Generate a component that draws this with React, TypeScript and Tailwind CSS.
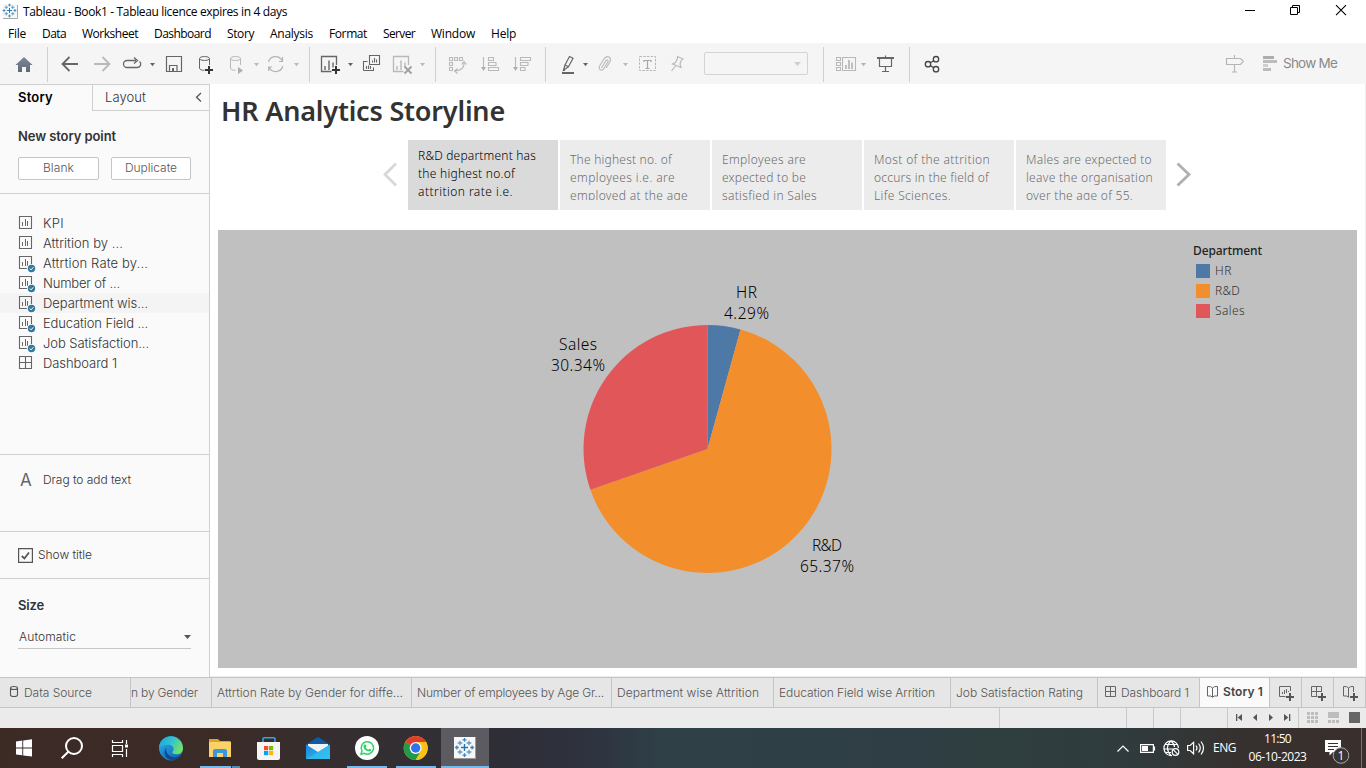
import { useLayoutEffect, useRef, type ReactNode } from "react";

/** Text tracked so that it fills a given width in pixels. */
function Fit({ w, className = "", children }: { w: number; className?: string; children: string }) {
  const ref = useRef<HTMLSpanElement>(null);
  useLayoutEffect(() => {
    const el = ref.current;
    if (!el) return;
    el.style.letterSpacing = "0px";
    const natural = el.getBoundingClientRect().width;
    el.style.letterSpacing = `${(w - natural) / children.length}px`;
  }, [w, children]);
  return (
    <span ref={ref} className={`inline-block shrink-0 whitespace-pre ${className}`}>
      {children}
    </span>
  );
}

/** A strip of drawing whose coordinates are window coordinates. */
function Strip({ x, y, w, h, children }: { x: number; y: number; w: number; h: number; children?: ReactNode }) {
  return (
    <svg width={w} height={h} viewBox={`${x} ${y} ${w} ${h}`} className="block shrink-0" fill="none">
      {children}
    </svg>
  );
}

const Tool = ({ x, w, children }: { x: number; w: number; children?: ReactNode }) => (
  <Strip x={x} y={43} w={w} h={41}>{children}</Strip>
);
const Sep = () => <div className="mt-1 h-[35px] w-px shrink-0 bg-[#d0d0d0]" />;
const Caret = ({ x, c = "#666" }: { x: number; c?: string }) => <path d={`M${x} 63h5l-2.5 3.2z`} fill={c} />;

function TableauMark({ cx, cy, s }: { cx: number; cy: number; s: number }) {
  const plus = (x: number, y: number, r: number) => `M${cx + (x - r) * s} ${cy + y * s}h${2 * r * s}M${cx + x * s} ${cy + (y - r) * s}v${2 * r * s}`;
  return (
    <g>
      <path d={plus(0, 0, 3.6)} stroke="#2a72a8" strokeWidth={1.4 * s} />
      <path d={plus(-4.6, -4.6, 2.4) + plus(4.6, -4.6, 2.4) + plus(-4.6, 4.6, 2.4) + plus(4.6, 4.6, 2.4)} stroke="#5f9dc6" strokeWidth={1.4 * s} />
      <path d={plus(0, -7.8, 2) + plus(0, 7.8, 2) + plus(-7.8, 0, 2) + plus(7.8, 0, 2)} stroke="#3f83b3" strokeWidth={1.3 * s} />
    </g>
  );
}

const menus: [string, number][] = [
  ["File", 18], ["Data", 24], ["Worksheet", 56], ["Dashboard", 57], ["Story", 27],
  ["Analysis", 43], ["Format", 38], ["Server", 32], ["Window", 44], ["Help", 25],
];

function TitleBar() {
  return (
    <div className="flex h-6 items-center font-['Open_Sans','Noto_Sans',sans-serif] text-[12px] text-black">
      <Strip x={0} y={0} w={23} h={24}>
        <path d="M3 4h15v15H3z" fill="#f6f7f8" />
        <path d="M17.5 5v13.5H3" stroke="#aaa" />
        <TableauMark cx={9.5} cy={10.5} s={0.7} />
      </Strip>
      <Fit w={264}>Tableau - Book1 - Tableau licence expires in 4 days</Fit>
      <div className="grow" />
      <Strip x={1240} y={0} w={126} h={24}>
        <g stroke="#000">
          <path d="M1245 10.5h10" />
          <path d="M1290.5 7.5h7v7h-7zM1292.5 7.5v-2h7v7h-2" />
          <path d="M1336 5.2l10 10M1346 5.2l-10 10" strokeWidth="1.1" />
        </g>
      </Strip>
    </div>
  );
}

function MenuBar() {
  return (
    <div className="flex h-[19px] items-center gap-4 pl-2 font-['Open_Sans','Noto_Sans',sans-serif] text-[12px] text-black">
      {menus.map(([m, w]) => <Fit key={m} w={w}>{m}</Fit>)}
    </div>
  );
}

function Toolbar() {
  return (
    <div className="flex h-[41px] bg-[#f5f5f5]">
      <Tool x={0} w={47}>
        <defs><linearGradient id="home" x1="0" y1="0" x2="0" y2="1"><stop stopColor="#7f8997" /><stop offset="1" stopColor="#5d697a" /></linearGradient></defs>
        <path d="M24 57l8.5 8H30v7h-4v-5h-4v5h-4v-7h-2.500z" fill="url(#home)" />
      </Tool>
      <Sep />
      <Tool x={48} w={261}>
        <path d="M78 64H63.500M69.500 57l-7 7l7 7" stroke="#666" strokeWidth="1.8" />
        <path d="M94 64h14.500M102.500 57l7 7l-7 7" stroke="#b9b9b9" strokeWidth="1.8" />
        <path d="M136 60.500h-9a3.500 3.500 0 0 0 0 7h10.500a3.400 3.400 0 0 0 2-6M134 57.500l3.500 3l-3.500 3" stroke="#666" strokeWidth="1.300" />
        <Caret x={150} />
        <path d="M166.500 56.500h15v15h-15zM169.500 71v-5.500h7.500v5.500" stroke="#666" strokeWidth="1.200" />
        <path d="M172 68h2v3.500h-2z" fill="#666" />
        <path d="M199.500 58.500v9.500q0 2.300 5 2.300M209.500 58.500v6.500" stroke="#666" />
        <ellipse cx="204.500" cy="58.500" rx="5" ry="2" stroke="#666" />
        <path d="M209 66v8M205 70h8" stroke="#333" strokeWidth="2" />
        <path d="M230.500 58.500v9.500q0 2.300 5 2.300M240.500 58.500v6.500" stroke="#b9b9b9" />
        <ellipse cx="235.500" cy="58.500" rx="5" ry="2" stroke="#b9b9b9" />
        <path d="M238 67l5 3.500l-5 3.500z" fill="#adadad" />
        <Caret x={254} c="#b9b9b9" />
        <path d="M268.500 62a7.300 7.300 0 0 1 13.500-1.500M282.800 66a7.300 7.300 0 0 1-13.600 1.500M282.500 57v4.500h-3.500M268.700 71v-4h3.500" stroke="#b3b3b3" strokeWidth="1.200" />
        <Caret x={294} c="#b9b9b9" />
      </Tool>
      <Sep />
      <Tool x={310} w={125}>
        <path d="M336.500 65v-8.500h-15v15h10" stroke="#666" strokeWidth="1.300" />
        <path d="M325 66v4M329 60.500v9.500M333 62.500v5" stroke="#666" strokeWidth="1.400" />
        <path d="M336 66v8M332 70h8" stroke="#333" strokeWidth="2" />
        <Caret x={348} />
        <path d="M369.500 59.500v-4h10v9h-4.500M363.500 70.500v-9h4M363.500 70.500h10v-3M366.500 66v3M368.500 65.500v3.500M370.500 66v3M372.500 60.500v2M374.500 58v4.500M376.500 59.500v3M369.500 59v5.500h6" stroke="#666" strokeWidth="1.100" />
        <path d="M408.500 65v-8.500h-15v15h10" stroke="#b9b9b9" strokeWidth="1.300" />
        <path d="M397 66v4M401 60.500v9.500M405 62.500v5" stroke="#b9b9b9" strokeWidth="1.400" />
        <path d="M404.500 66.500l7 7M411.500 66.500l-7 7" stroke="#a0a0a0" strokeWidth="1.900" />
        <Caret x={420} c="#b9b9b9" />
      </Tool>
      <Sep />
      <Tool x={436} w={109}>
        <g stroke="#b9b9b9" strokeWidth="1.100">
          <path d="M449.500 57.500h3v3h-3zM454.500 57.500h3v3h-3zM459.500 57.500h3v3h-3zM449.500 62.500h3v3h-3zM449.500 67.500h3v3h-3zM464 62q1 8-9 9M461.500 64.500l2.500-3l2.500 3M457.500 68.500l-3 2.500l3 2.500" />
          <path d="M488.500 57.500h5v3h-5zM488.500 62.500h7.500v3h-7.500zM488.500 67.500h10v3h-10zM483.500 57v13M520.500 57.500h10v3h-10zM520.500 62.500h7.500v3h-7.500zM520.500 67.500h4.500v3h-4.500zM515.500 57v13" />
        </g>
        <path d="M481 67h5l-2.500 4zM513 67h5l-2.500 4z" fill="#adadad" />
      </Tool>
      <Sep />
      <Tool x={546} w={158}>
        <path d="M562 72h12v2h-12z" fill="#666" />
        <path d="M569.500 56.500l3.500 1.800-4.500 8.500-3.500-1.800zM565 65l-1.500 5l5-3.200M563 70.500h2" stroke="#666" strokeWidth="1.200" />
        <Caret x={583} />
        <path d="M601.500 68l4.500-7.500q1.800-1.300 2.200.8l-4.500 7.700q-3 2.800-4.500-.5q-.5-1.500.8-3.200l4-6.500q2.500-3 5-1.800q2.200 1.500 1.200 4.200l-4 6.800" stroke="#b9b9b9" strokeWidth="1.100" />
        <Caret x={623} c="#b9b9b9" />
        <path d="M639.500 56.500h16v14h-16z" stroke="#b9b9b9" strokeDasharray="2.500 1.200" />
        <path d="M644 62v-1.500h7V62M647.500 60.500v8M645.500 68.500h4" stroke="#a8a8a8" strokeWidth="1.200" />
        <path d="M677.500 56.500l5.500 2.500-1.500 1-1.500 4 1 3.500-8.500-3.500 3-1.500 2-4zM675.500 66l-4 5" stroke="#b9b9b9" strokeWidth="1.200" />
      </Tool>
      <div className="mt-[9px] flex h-[23px] w-[104px] shrink-0 items-center justify-end rounded-[2px] border border-[#d3d3d3] pr-[5px]">
        <svg width="8" height="4"><path d="M0 0h7L3.500 4z" fill="#cfcfcf" /></svg>
      </div>
      <Tool x={808} w={15} />
      <Sep />
      <Tool x={824} w={85}>
        <path d="M836.500 57.500h4v3h-4zM836.500 62.500h4v3h-4zM836.500 67.500h4v3h-4zM842.500 57.500h13v13h-13z" stroke="#b9b9b9" strokeWidth="1.100" />
        <path d="M846 65v4M849 60v9M852 62.500v6.500" stroke="#b3b3b3" strokeWidth="1.600" />
        <Caret x={861} c="#b3b3b3" />
        <path d="M877 58h17" stroke="#666" strokeWidth="2" />
        <path d="M879.500 58v8.500h12V58M885.500 55.500v2M885.500 66.500v5M882 71.500h7" stroke="#666" strokeWidth="1.200" />
      </Tool>
      <Sep />
      <Tool x={910} w={50}>
        <g stroke="#444" strokeWidth="1.300"><circle cx="936" cy="59.200" r="2.700" /><circle cx="928" cy="64.200" r="2.700" /><circle cx="936" cy="69.200" r="2.700" /><path d="M930.300 62.800l3.500-2.100M930.300 65.600l3.500 2.100" /></g>
      </Tool>
      <div className="grow" />
      <Tool x={1220} w={63}>
        <path d="M1234.500 55v3M1226.500 58.500h14l2.800 2.800l-2.800 3.200h-14zM1234.500 65v7M1232 72h5" stroke="#b5b5b5" strokeWidth="1.200" />
        <path d="M1263 56h11v3h-11z" fill="#adadad" />
        <path d="M1263 60h14v3h-14z M1263 68h8v3h-8z" fill="#bcbcbc" />
        <path d="M1263 64h5v3h-5z" fill="#d0d0d0" />
      </Tool>
      <div className="flex w-[83px] items-center">
        <Fit w={54} className="font-['Inter',sans-serif] text-[13.5px] text-[#8a8a8a]">Show Me</Fit>
      </div>
    </div>
  );
}

function SheetIcon({ kind }: { kind: "sheet" | "used" | "dash" }) {
  return (
    <svg width="18" height="20" className="block shrink-0" fill="none">
      {kind === "dash" ? (
        <path d="M1.500 3.500h12v12h-12zM7.500 3.500v12M1.500 9.500h12" stroke="#666" strokeWidth="1.100" />
      ) : (
        <>
          <path d="M1.500 3.500h12v12h-12z" stroke="#666" strokeWidth="1.100" />
          <path d="M4.500 9v4M7.500 6v7M9.500 8v5" stroke="#666" />
        </>
      )}
      {kind === "used" && (
        <>
          <circle cx="13.500" cy="15.500" r="4.600" fill="#fafafa" />
          <circle cx="13.500" cy="15.500" r="3.700" fill="#34789b" />
          <path d="M11.700 15.500l1.300 1.400l2.300-2.600" stroke="#fff" />
        </>
      )}
    </svg>
  );
}

const sheets: [string, number, "sheet" | "used" | "dash"][] = [
  ["KPI", 21, "sheet"], ["Attrition by ...", 80, "sheet"], ["Attrtion Rate by...", 105, "used"], ["Number of ...", 77, "used"],
  ["Department wis...", 105, "used"], ["Education Field ...", 105, "used"], ["Job Satisfaction...", 106, "used"], ["Dashboard 1", 74, "dash"],
];

function Sidebar() {
  return (
    <div className="flex w-[210px] shrink-0 flex-col border-t border-r border-[#cfcfcf] bg-[#fafafa] font-['Inter',sans-serif] text-[13px] font-light text-[#333]">
      <div className="flex h-[26px] shrink-0">
        <div className="flex w-[92px] items-center pl-[18px]"><Fit w={35} className="font-semibold text-black">Story</Fit></div>
        <div className="flex grow items-center border-b border-l border-[#cfcfcf] pl-3">
          <Fit w={41}>Layout</Fit>
          <svg width="7" height="11" className="mr-[7px] mb-px ml-auto" fill="none"><path d="M6 1L1.500 5.200L6 9.500" stroke="#555" strokeWidth="1.300" /></svg>
        </div>
      </div>
      <div className="flex h-[83px] shrink-0 flex-col border-b border-[#cfcfcf] pl-[18px]">
        <div className="mt-4 flex h-5 items-center"><Fit w={98} className="font-semibold">New story point</Fit></div>
        <div className="mt-[10px] flex gap-3 text-[12px] text-[#555]">
          <div className="flex h-[23px] w-[81px] items-center justify-center rounded-[2px] border border-[#c6c6c6] bg-white pb-px"><Fit w={31}>Blank</Fit></div>
          <div className="flex h-[23px] w-[80px] items-center justify-center rounded-[2px] border border-[#c6c6c6] bg-white pb-px"><Fit w={52}>Duplicate</Fit></div>
        </div>
      </div>
      <div className="h-[261px] shrink-0 border-b border-[#cfcfcf] pt-[19px]">
        {sheets.map(([name, w, kind]) => (
          <div key={name} className={`flex h-5 items-center pl-[18px] ${name.startsWith("Department") ? "bg-[#f4f4f4]" : ""}`}>
            <SheetIcon kind={kind} />
            <div className="w-[7px]" />
            <Fit w={w} className="pt-[2px]">{name}</Fit>
          </div>
        ))}
      </div>
      <div className="flex h-[77px] shrink-0 items-start border-b border-[#cfcfcf] pt-[15px] pl-5 text-[12px]">
        <span className="w-[23px] text-[17px] leading-5 font-normal text-[#666]">A</span>
        <Fit w={88} className="leading-5">Drag to add text</Fit>
      </div>
      <div className="flex h-[47px] shrink-0 items-center border-b border-[#cfcfcf] pl-[18px] text-[12px]">
        <svg width="15" height="15" fill="none"><path d="M.6.6h13.800v13.800H.6z" stroke="#555" strokeWidth="1.200" /><path d="M3.800 8l2.600 2.500l4.600-6" stroke="#555" strokeWidth="1.800" /></svg>
        <Fit w={54} className="ml-[5px]">Show title</Fit>
      </div>
      <div className="pt-[17px] pl-[18px]">
        <div className="flex h-5 items-center"><Fit w={26} className="font-semibold">Size</Fit></div>
        <div className="mt-[10px] flex h-[23px] w-[173px] items-center justify-between border-b border-[#c6c6c6] pl-px text-[12px]">
          <Fit w={57}>Automatic</Fit>
          <svg width="7" height="4"><path d="M0 0h7L3.500 4z" fill="#555" /></svg>
        </div>
      </div>
    </div>
  );
}

const points: [string, number][][] = [
  [["R&D department has", 118], ["the highest no.of", 97], ["attrition rate i.e.", 95]],
  [["The highest no. of", 102], ["employees i.e. are", 105], ["employed at the age", 118]],
  [["Employees are", 84], ["expected to be", 84], ["satisfied in Sales", 95]],
  [["Most of the attrition", 116], ["occurs in the field of", 115], ["Life Sciences.", 77]],
  [["Males are expected to", 126], ["leave the organisation", 127], ["over the age of 55.", 107]],
];

const slices = [
  { name: "HR", v: 4.29, color: "#4e79a7" },
  { name: "R&D", v: 65.37, color: "#f28e2b" },
  { name: "Sales", v: 30.34, color: "#e15759" },
];
const CX = 707.5, CY = 449, R = 124;
const at = (pct: number) => {
  const a = (pct / 100) * 2 * Math.PI;
  return `${CX + R * Math.sin(a)} ${CY - R * Math.cos(a)}`;
};

function Pie() {
  let start = 0;
  const label = (x: number, y: number, w: number, s: string) => (
    <text x={x} y={y} textLength={w}>{s}</text>
  );
  return (
    <Strip x={218} y={230} w={968} h={438}>
      {slices.map((s) => {
        const d = `M${CX} ${CY}L${at(start)}A${R} ${R} 0 ${s.v > 50 ? 1 : 0} 1 ${at(start + s.v)}Z`;
        start += s.v;
        return <path key={s.name} d={d} fill={s.color} />;
      })}
      <g fill="#000" className="font-['Noto_Sans',sans-serif] text-[15.5px] font-light">
        {label(736, 298, 21, "HR")}
        {label(724, 319, 45, "4.29%")}
        {label(559, 350, 38, "Sales")}
        {label(551, 371, 54, "30.34%")}
        {label(812, 551, 30, "R&D")}
        {label(800, 572, 54, "65.37%")}
      </g>
    </Strip>
  );
}

function StoryView() {
  return (
    <div className="flex grow flex-col border-r border-b border-[#ededed] bg-white font-['Noto_Sans',sans-serif]">
      <div className="flex h-14 shrink-0 items-center pl-[11px]">
        <Fit w={284} className="pb-0.5 text-[27px] font-semibold text-[#333]">HR Analytics Storyline</Fit>
      </div>
      <div className="flex h-[70px] shrink-0">
        <Strip x={210} y={140} w={198} h={70}><path d="M396 163.500L385 174.500L396 185.500" stroke="#d8d8d8" strokeWidth="2.800" /></Strip>
        <div className="flex gap-0.5 text-[12px] leading-[18px] font-light">
          {points.map((lines, i) => (
            <div key={i} className={`h-[70px] w-[150px] pl-[10px] ${i === 0 ? "bg-[#dadada] pt-[7px] text-black" : "bg-[#ececec] pt-[11px] text-[#6c6c6c]"}`}>
              <div className={`flex flex-col overflow-hidden ${i === 0 ? "h-[54px]" : "h-[49px]"}`}>
                {lines.map(([t, w]) => <div key={t} className="h-[18px] shrink-0"><Fit w={w}>{t}</Fit></div>)}
              </div>
            </div>
          ))}
        </div>
        <Strip x={1166} y={140} w={30} h={70}><path d="M1177.500 163.500L1189 174.500L1177.500 185.500" stroke="#b0b0b0" strokeWidth="2.800" /></Strip>
      </div>
      <div className="mt-5 ml-2 flex h-[438px] w-[1139px] bg-[#c0c0c0]">
        <Pie />
        <div className="pt-[11px] pl-[7px] text-[12px]">
          <div className="flex h-5 items-center"><Fit w={69} className="font-medium text-[#222]">Department</Fit></div>
          {slices.map((s, i) => (
            <div key={s.name} className="flex h-5 items-center pb-px pl-[3px]">
              <div className="mr-[5px] size-[14px]" style={{ backgroundColor: s.color }} />
              <Fit w={[17, 25, 30][i]} className="pt-px font-light text-[#333]">{s.name}</Fit>
            </div>
          ))}
        </div>
      </div>
    </div>
  );
}

function SheetTabs() {
  const tab = "flex h-full shrink-0 items-center border-r border-[#c4c4c4] overflow-hidden";
  return (
    <div className="flex h-[31px] border-t border-b border-[#c4c4c4] bg-[#e6e6e6] font-['Inter',sans-serif] text-[12px] font-light text-[#555]">
      <div className={`${tab} w-[131px]`}>
        <Strip x={0} y={678} w={24} h={29}>
          <path d="M10.500 688v7q0 1.500 3.500 1.500t3.500-1.500V688M10.500 688q0-1.500 3.500-1.500t3.500 1.500q0 1.500-3.500 1.500t-3.500-1.500" stroke="#555" strokeWidth="1.100" />
        </Strip>
        <Fit w={68}>Data Source</Fit>
      </div>
      <div className={`${tab} w-[81px]`}><Fit w={67}>n by Gender</Fit></div>
      <div className={`${tab} w-[200px] pl-[5px]`}><Fit w={186}>Attrtion Rate by Gender for diffe...</Fit></div>
      <div className={`${tab} w-[200px] pl-[5px]`}><Fit w={187}>Number of employees by Age Gr...</Fit></div>
      <div className={`${tab} w-[162px] pl-[5px]`}><Fit w={142}>Department wise Attrition</Fit></div>
      <div className={`${tab} w-[177px] pl-[5px]`}><Fit w={156}>Education Field wise Arrition</Fit></div>
      <div className={`${tab} w-[147px] pl-[5px]`}><Fit w={127}>Job Satisfaction Rating</Fit></div>
      <div className={`${tab} w-[102px]`}>
        <Strip x={1098} y={678} w={23} h={29}><path d="M1105.500 686.500h10v10h-10zM1110.500 686.500v10M1105.500 691.500h10" stroke="#666" /></Strip>
        <Fit w={68}>Dashboard 1</Fit>
      </div>
      <div className={`${tab} w-[70px] bg-[#fafafa]`}>
        <Strip x={1200} y={678} w={23} h={29}><path d="M1207.500 686.500q3.500-.5 5 1.500q1.500-2 5-1.500v9.500h-3.500l-1.500 1.500l-1.500-1.500h-3.500zM1212.500 688v9" stroke="#666" /></Strip>
        <Fit w={40} className="pb-[2px] font-semibold text-[#444]">Story 1</Fit>
      </div>
      <div className={`${tab} w-8`}>
        <Strip x={1270} y={678} w={31} h={29}><path d="M1290.500 691v-4.500h-11v10h6M1282.500 692v2M1284.500 690v4M1286.500 689v4M1288.500 691v1" stroke="#666" /><path d="M1290 693v8M1286 697h8" stroke="#555" strokeWidth="2" /></Strip>
      </div>
      <div className={`${tab} w-8`}>
        <Strip x={1302} y={678} w={31} h={29}><path d="M1321.500 692v-5.500h-10v10h6M1316.500 686.500v10M1311.500 691.500h10" stroke="#666" /><path d="M1322 693v8M1318 697h8" stroke="#555" strokeWidth="2" /></Strip>
      </div>
      <div className={`${tab} w-8`}>
        <Strip x={1334} y={678} w={31} h={29}><path d="M1353.500 692v-5.500q-3.500-.5-5 1.500q-1.500-2-5-1.500v9.500h3.500l1.500 1.500M1348.500 688v9" stroke="#666" /><path d="M1354 693v8M1350 697h8" stroke="#555" strokeWidth="2" /></Strip>
      </div>
    </div>
  );
}

function StatusBar() {
  return (
    <div className="flex h-5 bg-[#ebebeb]">
      {["w-[1000px]", "w-[127px]", "w-[27px]", "w-[27px]", "w-[47px]"].map((w, i) => (
        <div key={i} className={`${w} shrink-0 border-r border-[#c9c9c9]`} />
      ))}
      <Strip x={1228} y={708} w={70} h={20}>
        <path d="M1236 714h1.300v7h-1.300zM1242 714v7l-4.300-3.500zM1257 714v7l-4-3.500zM1269 714v7l4-3.500zM1284 714v7l4.300-3.500zM1289 714h1.300v7h-1.300z" fill="#555" />
      </Strip>
      <div className="w-px shrink-0 bg-[#c9c9c9]" />
      <Strip x={1299} y={708} w={67} h={20}>
        {[712, 716, 720].map((y) => <path key={y} d={`M1307 ${y}h3v3h-3zM1311 ${y}h3v3h-3zM1315 ${y}h3v3h-3z`} fill="#bdbdbd" />)}
        <path d="M1328 712h11v6h-11zM1328 720h3v3h-3zM1332 720h3v3h-3zM1336 720h3v3h-3z" fill="#bdbdbd" />
        <path d="M1349 712h11v11h-11z" fill="#666" />
      </Strip>
    </div>
  );
}

function TaskBar() {
  return (
    <div className="flex h-10 bg-[linear-gradient(90deg,#3c2a25_0px,#3b2b27_220px,#352e30_340px,#2e2e38_520px,#2e3440_600px,#2f4047_660px,#2e3e44_930px,#2f3f3f_980px,#303b3d_1130px,#36312f_1240px,#3a2f2c_1366px)] font-['Open_Sans','Noto_Sans',sans-serif] text-[12px] text-white">
      <Strip x={0} y={728} w={441} h={40}>
        <defs>
          <linearGradient id="edgeA" x1="0" y1="0" x2="1" y2="1"><stop stopColor="#2fb5e8" /><stop offset="1" stopColor="#0a5bb5" /></linearGradient>
          <linearGradient id="edgeB" x1="0" y1="0" x2="1" y2=".4"><stop stopColor="#1aa5df" /><stop offset=".55" stopColor="#35c1cf" /><stop offset="1" stopColor="#6de06a" /></linearGradient>
          <linearGradient id="mail" x1="0" y1="0" x2="1" y2="1"><stop stopColor="#1b84d8" /><stop offset="1" stopColor="#2dc2ef" /></linearGradient>
        </defs>
        <path d="M16 741.500l6.300-.9v6.900H16zM23.200 740.500l8.800-1.200v8.200h-8.800zM16 748.400h6.300v6.900l-6.300-.9zM23.200 748.400H32v8.200l-8.800-1.200z" fill="#fff" />
        <circle cx="74" cy="746" r="8" stroke="#fff" strokeWidth="2" />
        <path d="M68.300 751.700L61.700 758.300" stroke="#fff" strokeWidth="2" />
        <path d="M112.500 740v2.500h10V740M112.500 745.500h10v6h-10zM112.500 757v-2.500h10v2.500M126.500 740v4M126.500 749v8" stroke="#fff" strokeWidth="1.200" />
        <path d="M125 744.500h3v3h-3z" fill="#fff" />
        <circle cx="171" cy="748" r="12" fill="url(#edgeA)" />
        <path d="M159.100 747a12 12 0 0 1 23.900 1.500c0 4-3 5.800-6.500 5.800c-3.300 0-5-1.200-4-2.500c2.500-3 .2-6.800-3.500-7c-4.500-.2-8 1-9.900 2.200z" fill="url(#edgeB)" />
        <path d="M166 750.500c-1 5.500 4 9.500 9 9.500q-8 1.500-11.500-3q-3-6 3-10z" fill="#1183d0" />
        <path d="M166.300 748c-1 5.500 3.500 9.500 9 9.300q3.500-.3 5.700-2.200q-2.500 4.900-9 4.900c-7 0-9-7-5.700-12z" fill="#0c4a8c" />
        <path d="M209 739h9l2 2h10.500v16H209z" fill="#e0a31c" />
        <path d="M209 742h22v15h-22z" fill="#fbd268" />
        <path d="M213 757v-6q0-2 2-2h10q2 0 2 2v6h-4v-4h-6v4z" fill="#3b97db" />
        <path d="M263 743v-4q0-1.200 1.200-1.200h9.600q1.200 0 1.200 1.200v4" stroke="#28a9e8" strokeWidth="1.600" />
        <path d="M257 742h23v16q0 2-2 2h-19q-2 0-2-2z" fill="#f4f4f4" />
        <path d="M264 746h4.200v4.200H264z" fill="#f25022" /><path d="M269 746h4.200v4.200H269z" fill="#7fba00" /><path d="M264 751h4.200v4.200H264z" fill="#00a4ef" /><path d="M269 751h4.200v4.200H269z" fill="#ffb900" />
        <path d="M306 744.500l12-7.500l12 7.500v4h-24z" fill="#0f5ba8" />
        <path d="M308 744h20v6l-10 4l-10-4z" fill="#f3f3f3" />
        <path d="M306 744.500l12 7.500l12-7.500V759h-24z" fill="url(#mail)" />
        <path d="M306 759l24-14v14z" fill="#39c3f2" fillOpacity=".6" />
        <circle cx="367" cy="748" r="12" fill="#fff" />
        <path d="M361 754.200l1-3.200a6.200 6.200 0 1 1 2.300 2.300z" stroke="#2fd366" strokeWidth="1.500" />
        <path d="M364.500 744.500l1.200 0l.8 1.900l-.8 1q1 1.700 2.700 2.300l1-1l1.900.9q.1 1.800-1.700 2q-5.700-.7-6.200-5.200q.1-1.200 1.100-1.900z" fill="#2fd366" />
        <circle cx="415.700" cy="748" r="12" fill="#fbc116" />
        <path d="M415.700 748L405.300 742a12 12 0 0 1 20.800 0z" fill="#e33b2e" />
        <path d="M415.700 748L405.300 742a12 12 0 0 0 10.400 18l5.200-9z" fill="#229a48" />
        <path d="M415.700 742h10.400a12 12 0 0 1-10.400 18l5.200-9z" fill="#fbc116" />
        <circle cx="415.700" cy="748" r="6" fill="#fff" /><circle cx="415.700" cy="748" r="4.700" fill="#2f75e8" />
        <path d="M200 766h31v2h-31zM347 766h40v2h-40zM396 766h40v2h-40z" fill="#76b9ed" />
        <path d="M232 766h8v2h-8z" fill="#5788ae" />
      </Strip>
      <div className="h-10 w-12 shrink-0 border-b-2 border-[#76b9ed] bg-[#5b5b61]">
        <Strip x={441} y={728} w={48} h={38}>
          <path d="M454 737h22v22h-22z" fill="#999" />
          <path d="M454 737h21v21h-21z" fill="#f7f7f7" />
          <TableauMark cx={464.5} cy={747.500} s={0.98} />
        </Strip>
      </div>
      <div className="grow" />
      <Strip x={1110} y={728} w={103} h={40}>
        <g stroke="#fff" strokeWidth="1.200">
          <path d="M1117.500 751.500l5.500-5.500l5.500 5.500" />
          <path d="M1140.600 744.600h12.800v7.800h-12.800zM1154.500 746.500v4" />
          <path d="M1172 755.500a7.300 7.300 0 1 1 6.500-7.500M1171 741q-3.500 3-3.500 7t3.500 7.500M1171 741q3.500 3 3.500 6M1164.500 744.500h13M1164 749h9M1165 752.500h6" />
          <circle cx="1175.500" cy="752" r="3.300" /><path d="M1173.200 749.700l4.600 4.600" />
          <path d="M1187.600 745.500h2.500l3.500-3.200v11.500l-3.500-3.300h-2.500zM1196 745.500q2 2.500 0 5M1198.500 743.500q3.500 4.500 0 9M1201 741.500q5 6.500 0 13" />
        </g>
        <path d="M1142 746h6v5h-6z" fill="#fff" />
      </Strip>
      <div className="flex w-[35px] shrink-0 items-center"><Fit w={23}>ENG</Fit></div>
      <div className="flex w-[60px] shrink-0 flex-col items-center pt-[2px] pr-px leading-[18px]">
        <Fit w={27}>11:50</Fit>
        <Fit w={58}>06-10-2023</Fit>
      </div>
      <Strip x={1308} y={728} w={58} h={40}>
        <path d="M1325 740h16v12h-8l-3.500 3.500V752H1325z" fill="#fff" />
        <path d="M1328 743.500h10M1328 746.500h10M1328 749.500h6" stroke="#3a302d" />
        <circle cx="1341" cy="755.500" r="7.800" fill="#3a3533" stroke="#aaa" />
        <text x="1337.500" y="760" fill="#fff" fontSize="12">1</text>
        <path d="M1361.500 728v40" stroke="#77706d" />
      </Strip>
    </div>
  );
}

export default function App() {
  return (
    <div className="flex h-[768px] w-[1366px] flex-col overflow-hidden bg-white">
      <TitleBar />
      <MenuBar />
      <Toolbar />
      <div className="flex h-[593px]">
        <Sidebar />
        <StoryView />
      </div>
      <SheetTabs />
      <StatusBar />
      <TaskBar />
    </div>
  );
}
